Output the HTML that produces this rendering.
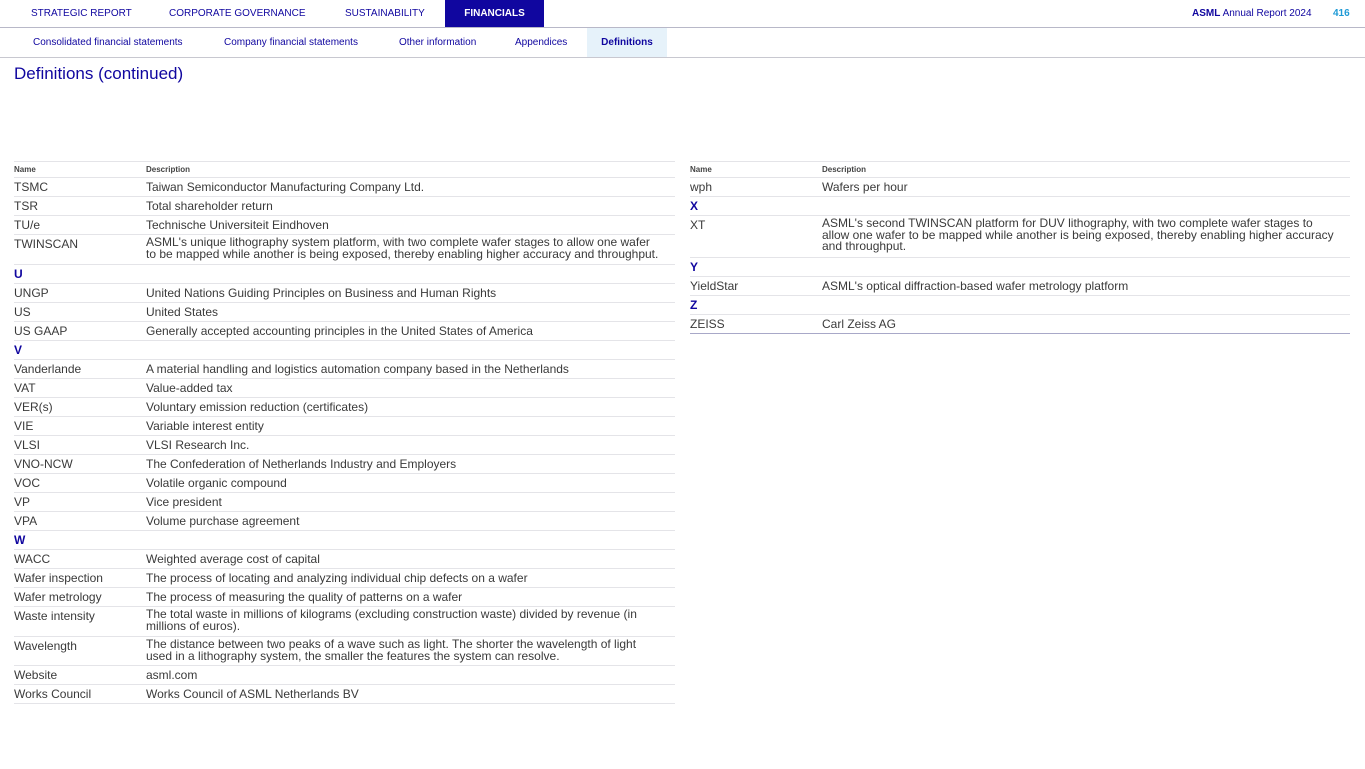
<!DOCTYPE html>
<html><head><meta charset="utf-8"><style>
*{margin:0;padding:0;box-sizing:border-box}
body{width:1365px;height:769px;background:#fff;font-family:"Liberation Sans",Arial,sans-serif;position:relative;overflow:hidden;color:#3a3a3a}
.top{position:absolute;left:0;top:0;width:1365px;height:28px;border-bottom:1px solid #b8b8c8}
.top span{position:absolute;top:0;height:27px;line-height:28px;font-size:10px;color:#10069f}
.sub{position:absolute;left:0;top:28px;width:1365px;height:30px;border-bottom:1px solid #c8c8d0}
.sub span{position:absolute;top:0;height:29px;line-height:30px;font-size:10px;color:#10069f}
h1{position:absolute;left:14px;top:64px;font-size:17px;font-weight:normal;color:#10069f}
.tbl{position:absolute;top:161px;border-top:1px solid #e4e4e8}
.r{position:relative;border-bottom:1px solid #e4e4e8;font-size:12px;height:19px}
.r .n,.r .d{position:absolute;top:0;line-height:18px}
.r .d{line-height:11.5px;top:2px}
.r.one .d{line-height:18px;top:0}
.h{height:16px;font-size:8px;font-weight:bold;color:#444}
.h .n,.h .d{line-height:15px}
.L{font-weight:bold;color:#10069f}
</style></head><body>
<div class="top">
<span style="left:31px">STRATEGIC REPORT</span>
<span style="left:169px">CORPORATE GOVERNANCE</span>
<span style="left:345px">SUSTAINABILITY</span>
<span style="left:445px;width:99px;background:#10069f;color:#fff;font-weight:bold;text-align:center">FINANCIALS</span>
<span style="left:1192px"><b>ASML</b> Annual Report 2024</span>
<span style="left:1333px;color:#1e9ad6;font-weight:bold">416</span>
</div>
<div class="sub">
<span style="left:33px">Consolidated financial statements</span>
<span style="left:224px">Company financial statements</span>
<span style="left:399px">Other information</span>
<span style="left:515px">Appendices</span>
<span style="left:587px;width:80px;background:#e6f2fa;font-weight:bold;text-align:center">Definitions</span>
</div>
<h1>Definitions (continued)</h1>

<div class="tbl" style="left:14px;width:661px">
<div class="r h"><span class="n" style="left:0">Name</span><span class="d" style="left:132px;top:0;line-height:15px">Description</span></div>
<div class="r one"><span class="n">TSMC</span><span class="d" style="left:132px">Taiwan Semiconductor Manufacturing Company Ltd.</span></div>
<div class="r one"><span class="n">TSR</span><span class="d" style="left:132px">Total shareholder return</span></div>
<div class="r one"><span class="n">TU/e</span><span class="d" style="left:132px">Technische Universiteit Eindhoven</span></div>
<div class="r" style="height:30px"><span class="n">TWINSCAN</span><span class="d" style="left:132px">ASML's unique lithography system platform, with two complete wafer stages to allow one wafer<br>to be mapped while another is being exposed, thereby enabling higher accuracy and throughput.</span></div>
<div class="r one"><span class="n L">U</span></div>
<div class="r one"><span class="n">UNGP</span><span class="d" style="left:132px">United Nations Guiding Principles on Business and Human Rights</span></div>
<div class="r one"><span class="n">US</span><span class="d" style="left:132px">United States</span></div>
<div class="r one"><span class="n">US GAAP</span><span class="d" style="left:132px">Generally accepted accounting principles in the United States of America</span></div>
<div class="r one"><span class="n L">V</span></div>
<div class="r one"><span class="n">Vanderlande</span><span class="d" style="left:132px">A material handling and logistics automation company based in the Netherlands</span></div>
<div class="r one"><span class="n">VAT</span><span class="d" style="left:132px">Value-added tax</span></div>
<div class="r one"><span class="n">VER(s)</span><span class="d" style="left:132px">Voluntary emission reduction (certificates)</span></div>
<div class="r one"><span class="n">VIE</span><span class="d" style="left:132px">Variable interest entity</span></div>
<div class="r one"><span class="n">VLSI</span><span class="d" style="left:132px">VLSI Research Inc.</span></div>
<div class="r one"><span class="n">VNO-NCW</span><span class="d" style="left:132px">The Confederation of Netherlands Industry and Employers</span></div>
<div class="r one"><span class="n">VOC</span><span class="d" style="left:132px">Volatile organic compound</span></div>
<div class="r one"><span class="n">VP</span><span class="d" style="left:132px">Vice president</span></div>
<div class="r one"><span class="n">VPA</span><span class="d" style="left:132px">Volume purchase agreement</span></div>
<div class="r one"><span class="n L">W</span></div>
<div class="r one"><span class="n">WACC</span><span class="d" style="left:132px">Weighted average cost of capital</span></div>
<div class="r one"><span class="n">Wafer inspection</span><span class="d" style="left:132px">The process of locating and analyzing individual chip defects on a wafer</span></div>
<div class="r one"><span class="n">Wafer metrology</span><span class="d" style="left:132px">The process of measuring the quality of patterns on a wafer</span></div>
<div class="r" style="height:30px"><span class="n">Waste intensity</span><span class="d" style="left:132px">The total waste in millions of kilograms (excluding construction waste) divided by revenue (in<br>millions of euros).</span></div>
<div class="r" style="height:29px"><span class="n">Wavelength</span><span class="d" style="left:132px">The distance between two peaks of a wave such as light. The shorter the wavelength of light<br>used in a lithography system, the smaller the features the system can resolve.</span></div>
<div class="r one"><span class="n">Website</span><span class="d" style="left:132px">asml.com</span></div>
<div class="r one"><span class="n">Works Council</span><span class="d" style="left:132px">Works Council of ASML Netherlands BV</span></div>
</div>

<div class="tbl" style="left:690px;width:660px">
<div class="r h"><span class="n">Name</span><span class="d" style="left:132px;top:0;line-height:15px">Description</span></div>
<div class="r one"><span class="n">wph</span><span class="d" style="left:132px">Wafers per hour</span></div>
<div class="r one"><span class="n L">X</span></div>
<div class="r" style="height:42px"><span class="n">XT</span><span class="d" style="left:132px">ASML's second TWINSCAN platform for DUV lithography, with two complete wafer stages to<br>allow one wafer to be mapped while another is being exposed, thereby enabling higher accuracy<br>and throughput.</span></div>
<div class="r one"><span class="n L">Y</span></div>
<div class="r one"><span class="n">YieldStar</span><span class="d" style="left:132px">ASML's optical diffraction-based wafer metrology platform</span></div>
<div class="r one"><span class="n L">Z</span></div>
<div class="r one" style="border-bottom-color:#a8a8c8"><span class="n">ZEISS</span><span class="d" style="left:132px">Carl Zeiss AG</span></div>
</div>
</body></html>
